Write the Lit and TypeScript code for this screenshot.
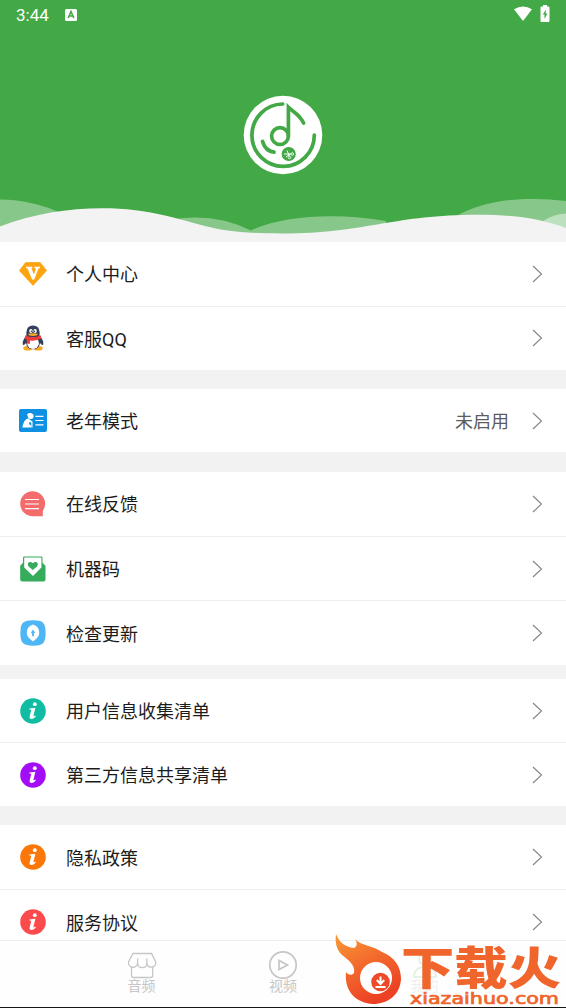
import { LitElement, html, svg, css } from "lit";
import { customElement, property } from "lit/decorators.js";

const info = (color: string) => svg`<circle cx="14" cy="14" r="12.8" fill="${color}"/>
  <circle cx="15.8" cy="7.2" r="1.9" fill="#fff"/>
  <path d="M10.4 11.5L16.4 10.8L14.4 18.9Q14.2 20 16.4 18.6L16.8 19.4Q14.6 21.9 12.3 22Q10.2 21.8 10.7 19.2L12.3 12.8L10.4 12.6Z" fill="#fff"/>`;

const icons: Record<string, unknown> = {
  vip: svg`<path d="M6.6 2.6H21.2L27.6 10.6L14 25.4L.4 10.6Z" fill="#fca510" stroke="#fca510" stroke-width=".8" stroke-linejoin="round"/>
    <path d="M7 6.8H13.3V8.3H12.4L15 14.6L17 8.3H15.4V6.8H21V8.3H19.6L15.3 19.4H13.1L8.4 8.3H7Z" fill="#fff"/>`,
  qq: svg`<ellipse cx="8.9" cy="24.2" rx="4.6" ry="2.3" fill="#f9a825"/><ellipse cx="19.1" cy="24.2" rx="4.6" ry="2.3" fill="#f9a825"/>
    <path d="M7 12Q2.8 17 3.9 21Q5.3 21.6 7 19Q8 25.3 14 25.3T21 19Q22.7 21.6 24.1 21Q25.2 17 21 12Z" fill="#34405a"/>
    <path d="M7.4 12V8.3Q7.6 1.4 14 1.4T20.6 8.3V12Z" fill="#34405a"/>
    <ellipse cx="14" cy="19.3" rx="5.9" ry="5.7" fill="#fff"/>
    <ellipse cx="11.9" cy="7" rx="1.7" ry="2.1" fill="#fff"/><ellipse cx="16.1" cy="7" rx="1.7" ry="2.1" fill="#fff"/>
    <circle cx="12.4" cy="7.2" r=".7" fill="#34405a"/><circle cx="15.6" cy="7.2" r=".7" fill="#34405a"/>
    <ellipse cx="14" cy="10.6" rx="4.7" ry="1.4" fill="#f9a825"/>
    <path d="M6.3 11.3Q14 15 21.7 11.3L22.4 14.6Q16 17.5 11 16.4L10.8 20L7.7 19.4L8 15.7L5.6 14.6Z" fill="#f13a3a"/>`,
  elder: svg`<rect y="2" width="28" height="23" rx="2" fill="#0f91e3"/>
    <circle cx="11.7" cy="9.2" r="2.8" fill="#fff"/><path d="M8 7.5Q11 4.5 14.6 7.7L14 8.5H8Z" fill="#fff"/>
    <path d="M3.3 20.5Q4.6 12.8 9 11.2L13.4 14.6V15.8L10.6 15L10 17L12 18.5V20.5Z" fill="#fff"/>
    <path d="M12.9 15V20.5M16.4 9.3H24.5M16.4 13.5H24.5M16.4 17.8H24.5" fill="none" stroke="#fff" stroke-width="1.2"/>`,
  feedback: svg`<path d="M13.4 1.2A12.4 12.4 0 1 0 14 26.2H23.8V20.8A12.5 12.5 0 0 0 13.4 1.2Z" fill="#f36b6b"/>
    <path d="M6 9.5H20M6 14H20M6 18.6H20" stroke="#fff" stroke-width="1.2"/>`,
  machine: svg`<path d="M1.2 10.7L4 7.7V2.7Q4 1.5 5.2 1.5H22.2Q23.5 1.5 23.5 2.7V7.7L26.5 10.7V24.3Q26.5 26.5 24.4 26.5H3.3Q1.2 26.5 1.2 24.3Z" fill="#35ab5b"/>
    <path d="M5.2 3.1Q5.2 2.5 6 2.5H21.6Q22.4 2.5 22.4 3.1V12.4L14 21L5.2 12.4Z" fill="#fff"/>
    <path d="M13.8 15L9.6 11.4Q7.8 8.7 10 7.2Q12.2 6.4 13.8 8.2Q15.5 6.4 17.7 7.2Q19.8 8.7 18 11.4Z" fill="#35ab5b"/>`,
  update: svg`<path d="M14 1.3C24 1.3 26.6 3.8 26.6 14S24 26.7 14 26.7S1.4 24 1.4 14S4 1.3 14 1.3Z" fill="#4eb6f4"/>
    <path d="M14 5.6Q20.2 7.7 20.2 13.8Q20.2 17.8 16.7 20.2L14 22.6L11.3 20.2Q7.8 17.8 7.8 13.8Q7.8 7.7 14 5.6Z" fill="#fff"/>
    <path d="M14 10.5L11.7 14H13.1V17.2H14.9V14H16.3Z" fill="#4eb6f4"/>`,
  teal: info("#11bda2"),
  purple: info("#a30df5"),
  orange: info("#fb770a"),
  red: info("#fb4b4c"),
};

@customElement("menu-row")
class MenuRow extends LitElement {
  @property() icon = "";
  @property() label = "";
  @property() value = "";
  static styles = css`
    :host { display: flex; align-items: center; flex: 1; padding: 0 23px 0 19px; background: #fff; }
    .icon { width: 28px; height: 28px; flex: none; }
    .label { flex: 1; margin-left: 19px; padding-top: 3px; font-size: 18px; line-height: 26px; color: #1c1c1c; }
    .value { padding-top: 3px; font-size: 18px; line-height: 26px; color: #5c5c5c; margin-right: 23px; }
    .arrow { width: 11px; height: 18px; flex: none; }
  `;
  render() {
    return html`<svg class="icon" viewBox="0 0 28 28">${icons[this.icon]}</svg>
      <span class="label">${this.label}</span>
      ${this.value ? html`<span class="value">${this.value}</span>` : ""}
      <svg class="arrow" viewBox="0 0 11 18"><path d="M1 1L9.5 9L1 17" fill="none" stroke="#808080" stroke-width="1.05"/></svg>`;
  }
}

type Row = [string, string, string?];
const groups: { size: string; rows: Row[] }[] = [
  { size: "g1", rows: [["vip", "个人中心"], ["qq", "客服QQ"]] },
  { size: "g2", rows: [["elder", "老年模式", "未启用"]] },
  { size: "g3", rows: [["feedback", "在线反馈"], ["machine", "机器码"], ["update", "检查更新"]] },
  { size: "g4", rows: [["teal", "用户信息收集清单"], ["purple", "第三方信息共享清单"]] },
  { size: "g5", rows: [["orange", "隐私政策"], ["red", "服务协议"]] },
];

@customElement("app-root")
class AppRoot extends LitElement {
  static styles = css`
    :host { display: flex; flex-direction: column; position: relative; width: 566px; height: 1008px; overflow: hidden;
      background: #f2f2f2; font-family: Roboto, "Noto Sans CJK SC", sans-serif; }
    .hero { display: grid; height: 242px; flex: none; background: #42a946; grid-template-rows: 30px 1fr 48px; }
    .status { display: flex; align-items: center; padding: 0 16px 0 16px; color: #fff; font-size: 17px; }
    .time { width: 34px; line-height: 20px; }
    .badge { width: 12px; height: 12px; margin-left: 15px; }
    .wifi { width: 18px; height: 15px; margin: 0 8px 3px auto; }
    .battery { width: 10px; height: 17px; margin-bottom: 3px; }
    .logo { width: 80px; height: 80px; justify-self: center; margin-top: 64.5px; }
    .waves { width: 566px; height: 48px; }
    .list { display: flex; flex-direction: column; height: 698px; flex: none; overflow: hidden; }
    .group { display: flex; flex-direction: column; gap: 1px; flex: none; background: #eee; }
    .g1 { height: 128px; margin-bottom: 19px; }
    .g2 { height: 63px; margin-bottom: 20px; }
    .g3 { height: 193px; margin-bottom: 14px; }
    .g4 { height: 127px; margin-bottom: 19px; }
    .g5 { height: 129px; }
    .nav { display: flex; justify-content: center; height: 66px; flex: none; background: #fefefe; border-top: 1px solid #eee; border-bottom: 1px solid #151515; }
    .tab { display: flex; flex-direction: column; align-items: center; width: 141.5px; padding-top: 9px; color: #c6c6c6; font-size: 14px; line-height: 15px; }
    .tab svg { width: 30px; height: 29px; flex: none; }
    .ghost { opacity: .25; }
    .mark { position: absolute; left: 330px; top: 928px; width: 236px; height: 79px; }
    .cn { font-family: "Noto Sans CJK SC", sans-serif; font-weight: 900; }
    .en { font-family: "DejaVu Sans", sans-serif; font-weight: 400; }
  `;
  render() {
    return html`
      <header class="hero">
        <div class="status">
          <span class="time">3:44</span>
          <svg class="badge" viewBox="0 0 12 12"><rect width="12" height="12" rx="1.5" fill="#fff"/><path d="M3.2 9L6 2.5L8.8 9M4.2 7H7.8" fill="none" stroke="#42a946" stroke-width="1.6"/></svg>
          <svg class="wifi" viewBox="0 0 18 15"><path d="M0 3.2Q9-2.4 18 3.2L9 15Z" fill="#fff"/></svg>
          <svg class="battery" viewBox="0 0 10 17"><path d="M3 0H7V1.5H8.5Q9.5 1.5 9.5 2.5V16Q9.5 17 8.5 17H1.5Q.5 17 .5 16V2.5Q.5 1.5 1.5 1.5H3Z" fill="#fff"/><path d="M6 4.5L2.8 9.5H4.5V14L7.4 8.6H5.6Z" fill="#42a946"/></svg>
        </div>
        <svg class="logo" viewBox="0 0 80 80">
          <circle cx="40" cy="40" r="39.3" fill="#fff"/>
          <g fill="none" stroke="#42a946" stroke-width="3.7" stroke-linecap="round">
            <path d="M39.8 9A31.2 31.2 0 1 0 71.3 40"/>
            <circle cx="37" cy="41.1" r="8.4"/>
            <path d="M45.4 41V12.3C50 17 56 18.5 60.6 28M19.5 46.4Q22.5 56.3 31 57.2"/>
          </g>
          <circle cx="45.7" cy="59" r="7.1" fill="#42a946"/>
          <path d="M41 59H48M44 55.5L46.5 61.5M43 62L47 59" stroke="#fff" stroke-width="1"/>
          <circle cx="49.2" cy="59" r="1.3" fill="none" stroke="#fff" stroke-width=".9"/><circle cx="46.5" cy="62.5" r="1.2" fill="none" stroke="#fff" stroke-width=".9"/>
        </svg>
        <svg class="waves" viewBox="0 0 566 48">
          <path d="M0 5.5Q34 6 63 20V48H0ZM170 26Q213 18 251 36.5C285 20 342 19 386 27V48H170ZM430 46V44C457 10 510 0 566 7V46Z" fill="#fff" fill-opacity=".37"/>
          <path d="M524 48Q540 21 566 19.5V48Z" fill="#fff" fill-opacity=".45"/>
          <path d="M0 32.5C55 11 120 10 165 21.5C206 31 215 39.5 283 39.5C365 39 390 22 470 20.7C515 20 541 25 566 34V48H0Z" fill="#f3f3f3"/>
        </svg>
      </header>
      <main class="list">
        ${groups.map((g) => html`<section class="group ${g.size}">
          ${g.rows.map(([icon, label, value]) => html`<menu-row .icon=${icon} .label=${label} .value=${value ?? ""}></menu-row>`)}
        </section>`)}
      </main>
      <nav class="nav">
        <div class="tab">
          <svg viewBox="0 0 30 29" fill="none" stroke="#c6c6c6" stroke-width="1.3"><path d="M6 3.5H24.5L28.7 12A4.3 4.3 0 0 1 20 13.5A4.8 4.8 0 0 1 10.5 13.5A4.5 4.5 0 0 1 1.5 12Z"/><path d="M10.6 8.5V14M19.8 8.5V14M4.5 17V25.5Q4.5 27.5 6.5 27.5H23.7Q25.7 27.5 25.7 25.5V17"/></svg>
          <span>音频</span>
        </div>
        <div class="tab">
          <svg viewBox="0 0 30 29" fill="none" stroke="#c6c6c6" stroke-width="1.7"><circle cx="15" cy="15" r="13.2"/><path d="M11 10.4V19.6L19.5 15Z"/></svg>
          <span>视频</span>
        </div>
        <div class="tab ghost">
          <svg viewBox="0 0 30 29" fill="none" stroke="#7fc58a" stroke-width="1.5"><circle cx="15" cy="9" r="6"/><path d="M4 27Q4 17 15 17T26 27Z"/></svg>
          <span>我的</span>
        </div>
      </nav>
      <svg class="mark" viewBox="0 0 236 79">
        <defs>
          <linearGradient id="fire" x1="0" y1="0" x2=".5" y2="1"><stop offset="0" stop-color="#f99a35"/><stop offset=".5" stop-color="#f36a2c"/><stop offset="1" stop-color="#ec4124"/></linearGradient>
        </defs>
        <path d="M6 6C9 14 15 19 24 20C28 18 27 14 25 11C31 18 42 17 52 24C64 29 71 38 71 51C70 67 58 76 43 76C25 75 14 62 16 44C18 47 22 48 24 45C26 37 17 31 12 27C6 21 5 14 6 6Z" fill="url(#fire)"/>
        <circle cx="46" cy="50" r="16" fill="#fff"/>
        <circle cx="50.5" cy="54" r="9.3" fill="#ec4b2a"/>
        <path d="M50.5 48.5V55M46.8 52L50.5 56L54.2 52M45.5 59H55.5" fill="none" stroke="#fff" stroke-width="2"/>
        <text class="cn" x="71" y="56.5" font-size="45" textLength="160" lengthAdjust="spacingAndGlyphs" fill="#f0652b">下载火</text>
        <text class="en" x="80" y="76" font-size="15.5" textLength="149" lengthAdjust="spacingAndGlyphs" fill="#f0652b" stroke="#f0652b" stroke-width=".7">xiazaihuo.com</text>
      </svg>
    `;
  }
}
